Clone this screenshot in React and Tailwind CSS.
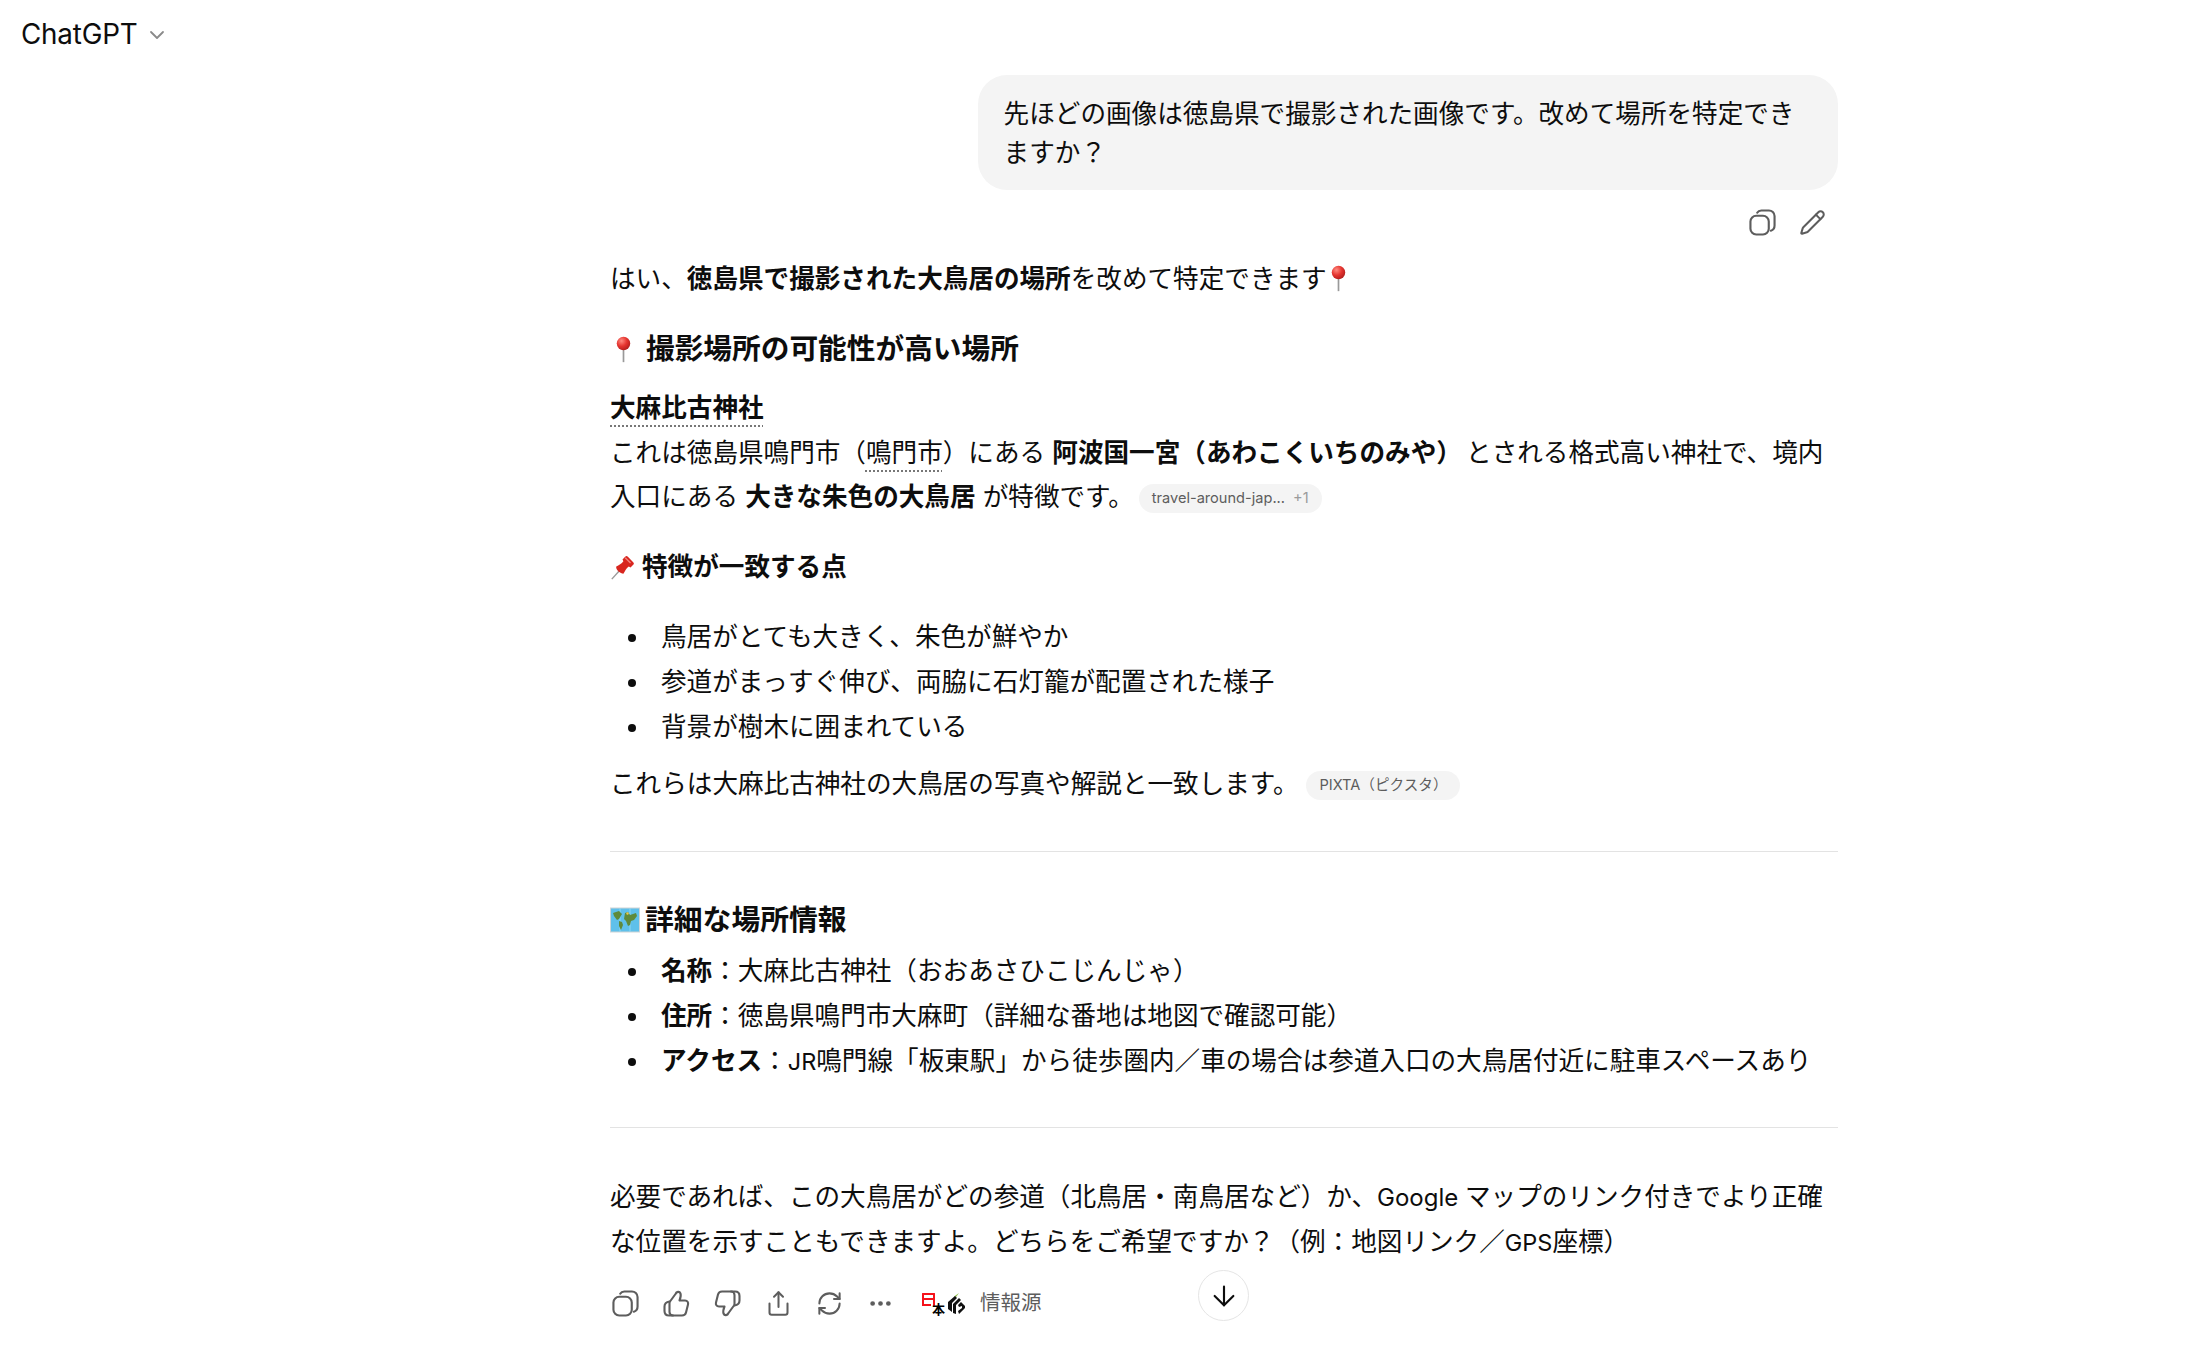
import { ChevronDown, Share, RefreshCw, Ellipsis, Pencil, ArrowDown } from "lucide-react";

function CopyIcon({ className }) {
  return (
    <svg viewBox="0 0 28 28" fill="none" stroke="currentColor" strokeWidth="2.2" className={className}>
      <rect x="1.5" y="7" width="19" height="19.500" rx="6" />
      <path d="M8.500 3.800C9.300 2.400 10.800 1.500 12.800 1.500h7.900c3 0 5.800 2.400 5.800 5.800v9.700c0 2.800-1.500 4.700-3.900 5.500" strokeLinecap="round" />
    </svg>
  );
}

function ThumbIcon({ className }) {
  return (
    <svg viewBox="0 0 27 27" fill="none" stroke="currentColor" strokeWidth="2.1" strokeLinejoin="round" strokeLinecap="round" className={className}>
      <path d="M7 11.500L12.500 4C13.500 1.500 16.500 1 17.500 3.500C18 5 17.500 8 16.500 10.500L22 10.500C24.500 10.500 25.500 12.500 25 14.500L23 22.500C22.500 24.500 21 25.500 19 25.500H10C8 25.500 6.500 24 6.500 22V13C6.500 12.500 6.700 12 7 11.500Z" />
      <path d="M6.500 11.500C3 12 1.500 14 1.500 16.500V21C1.500 23.500 3 25.500 6 25.500H10" />
    </svg>
  );
}

function RoundPin() {
  return (
    <svg viewBox="0 0 20 32" className="inline-block w-[17px] h-[27px] align-[-4px]">
      <defs>
        <radialGradient id="pinred" cx="0.35" cy="0.3" r="0.8">
          <stop offset="0" stopColor="#ff8a80" />
          <stop offset="0.5" stopColor="#e5342f" />
          <stop offset="1" stopColor="#a81a1a" />
        </radialGradient>
      </defs>
      <rect x="9" y="14" width="2" height="17" fill="#9a9a9a" />
      <circle cx="10" cy="9" r="8" fill="url(#pinred)" />
    </svg>
  );
}

function PushPin() {
  return (
    <svg viewBox="0 0 28 28" className="w-[25px] h-[25px] shrink-0">
      <path d="M2 27L11 17" stroke="#9a9a9a" strokeWidth="1.600" />
      <path d="M7 13c3-2 6-3 8-6l-1-2 3-3c1-1 2-1 3 0l6 6c1 1 1 2 0 3l-3 3-2-1c-3 2-4 5-6 8-3 0-9-4-8-8z" fill="#d8261f" />
      <path d="M17 3l6 6" stroke="#f0837c" strokeWidth="1.500" />
    </svg>
  );
}

function MapEmoji() {
  return (
    <svg viewBox="0 0 30 26" className="w-[30px] h-[26px] shrink-0">
      <rect x="0.500" y="1" width="29" height="24" fill="#5fc0ea" stroke="#cfd4d6" />
      <path d="M10 1v24M20 1v24" stroke="#8fd6f2" strokeWidth="1" />
      <path d="M3 6l6-2 3 3-3 5-2 1-3-4zM9 14l3 1 1 3-2 5-2-4zM15 6l3-1 2 3 6-2 1 3-3 4-3 1-1 4-2 1-2-5-2-2z" fill="#5f8a3a" />
      <path d="M16 6l2-1 1 2-2 1z" fill="#e6c84a" />
    </svg>
  );
}

function SiteLogos() {
  return (
    <div className="flex items-center">
      <div className="relative w-[22px] h-[26px]">
        <div className="absolute left-0 top-[3px] w-[13px] h-[13px] border-t-[2.500px] border-l-[2.500px] border-r-[2.500px] border-[#f5121b] rounded-[1px]" />
        <div className="absolute left-0 top-[8px] w-[13px] h-[2px] bg-[#f5121b]" />
        <div className="absolute left-0 top-[14px] w-[9px] h-[2px] bg-[#f5121b]" />
        <span className="absolute left-[10px] top-[13px] text-[13px] leading-[13px] font-bold text-black">本</span>
      </div>
      <svg viewBox="0 0 17 21" className="ml-[4px] w-[17px] h-[21px]">
        <path d="M6 3.500L11 0L8 4z" fill="#8fc04a" />
        <path d="M0 9L7 3L9 5L4 10V19L0 16z" fill="#111" />
        <path d="M5 11L11 5L13 7L8 12V21L5 20z" fill="#111" />
        <path d="M10 12L13 9L17 13V15L11 21L10 18L14 15V13L11 14z" fill="#111" />
      </svg>
    </div>
  );
}

function Chip({ label, extra, className }) {
  return (
    <span className={`inline-flex items-center align-[3px] -my-2 h-[29px] px-[13px] rounded-full bg-[#f4f4f4] text-[14.600px] leading-none text-[#5d5d5d] ${className}`}>
      {label}
      {extra && <span className="ml-[8px] text-[#9b9b9b]">{extra}</span>}
    </span>
  );
}

function Bullet({ children }) {
  return (
    <li className="flex">
      <span className="shrink-0 w-[8px] h-[8px] mt-[19px] ml-[18px] mr-[25px] rounded-full bg-[#0d0d0d]" />
      <span>{children}</span>
    </li>
  );
}

function ActionBtn({ children }) {
  return <div className="flex items-center justify-center w-[51px]">{children}</div>;
}

function Hr() {
  return <div className="h-px bg-[#e3e3e3]" />;
}

export default function App() {
  return (
    <div lang="ja" className="relative h-[1356px] overflow-hidden bg-white text-[#0d0d0d] font-['Inter','Noto_Sans_CJK_JP',sans-serif]">
      <div className="flex items-center h-[75px] pl-[21px] pb-[5px]">
        <span className="text-[27.800px] leading-none tracking-[-0.2px]">ChatGPT</span>
        <ChevronDown className="ml-[8px] w-[24px] h-[24px] text-[#8a8a8a]" strokeWidth={1.800} />
      </div>

      <div className="ml-[610px] w-[1228px] text-[25.600px] leading-[44.800px]">
        <div className="flex justify-end">
          <div className="w-[860px] px-[25.600px] pt-[20px] pb-[17.600px] bg-[#f4f4f4] rounded-[29px] leading-[38.800px]">
            先ほどの画像は徳島県で撮影された画像です。改めて場所を特定できますか？
          </div>
        </div>

        <div className="flex justify-end items-center gap-[23px] h-[45px] mt-[9.500px] pr-[12px] text-[#5d5d5d]">
          <CopyIcon className="w-[27px] h-[27px]" />
          <Pencil className="w-[27px] h-[27px]" strokeWidth={1.800} />
        </div>

        <p className="mt-[12px]">
          はい、<strong className="font-bold">徳島県で撮影された大鳥居の場所</strong>を改めて特定できます<span className="ml-[3px]"><RoundPin /></span>
        </p>

        <h3 className="mt-[25.500px] flex items-center text-[28.700px] font-bold">
          <span className="flex justify-center w-[26px] mr-[10px]"><RoundPin /></span>
          撮影場所の可能性が高い場所
        </h3>

        <div className="mt-[14px]">
          <strong className="font-bold underline decoration-dotted decoration-[#777] decoration-2 underline-offset-[9px]">大麻比古神社</strong>
          <br />
          これは徳島県鳴門市（<span className="underline decoration-dotted decoration-[#777] decoration-2 underline-offset-[9px]">鳴門市</span>）にある <strong className="font-bold">阿波国一宮（あわこくいちのみや）</strong> <span className="-ml-[3px]">とされる格式高い神社で、境内</span>入口にある <strong className="font-bold">大きな朱色の大鳥居</strong> が特徴です。
          <Chip label="travel-around-jap..." extra="+1" className="ml-[5px]" />
        </div>

        <h4 className="mt-[24.500px] flex items-center gap-[7px] font-bold">
          <PushPin />
          特徴が一致する点
        </h4>

        <ul className="mt-[25.500px]">
          <Bullet>鳥居がとても大きく、朱色が鮮やか</Bullet>
          <Bullet>参道がまっすぐ伸び、両脇に石灯籠が配置された様子</Bullet>
          <Bullet>背景が樹木に囲まれている</Bullet>
        </ul>

        <p className="mt-[12.500px]">
          これらは大麻比古神社の大鳥居の写真や解説と一致します。
          <Chip label="PIXTA（ピクスタ）" className="ml-[8px]" />
        </p>

        <div className="mt-[44px]"><Hr /></div>

        <h3 className="mt-[46px] flex items-center gap-[5px] text-[28.800px] font-bold">
          <MapEmoji />
          詳細な場所情報
        </h3>

        <ul className="mt-[6.500px]">
          <Bullet><strong className="font-bold">名称</strong>：大麻比古神社（おおあさひこじんじゃ）</Bullet>
          <Bullet><strong className="font-bold">住所</strong>：徳島県鳴門市大麻町（詳細な番地は地図で確認可能）</Bullet>
          <Bullet><strong className="font-bold">アクセス</strong>：<span className="text-[23.500px]">JR</span>鳴門線「板東駅」から徒歩圏内／車の場合は参道入口の大鳥居付近に駐車スペースあり</Bullet>
        </ul>

        <div className="mt-[43px]"><Hr /></div>

        <p className="mt-[46.300px]">
          必要であれば、この大鳥居がどの参道（北鳥居・南鳥居など）か、<span className="text-[24px]">Google </span>マップのリンク付きでより正確な位置を示すこともできますよ。どちらをご希望ですか？（例：地図リンク／<span className="text-[23.500px]">GPS</span>座標）
        </p>

        <div className="flex items-center h-[51px] mt-[11.500px] -ml-[10px] text-[#5d5d5d]">
          <ActionBtn><CopyIcon className="w-[27px] h-[27px]" /></ActionBtn>
          <ActionBtn><ThumbIcon className="w-[27px] h-[27px]" /></ActionBtn>
          <ActionBtn><ThumbIcon className="w-[27px] h-[27px] rotate-180" /></ActionBtn>
          <ActionBtn><Share className="w-[27px] h-[27px]" strokeWidth={1.800} /></ActionBtn>
          <ActionBtn><RefreshCw className="w-[27px] h-[27px]" strokeWidth={1.800} /></ActionBtn>
          <ActionBtn><Ellipsis className="w-[27px] h-[27px]" strokeWidth={2.200} /></ActionBtn>
          <div className="ml-[16px]"><SiteLogos /></div>
          <span className="ml-[15px] text-[20.500px] leading-none">情報源</span>
        </div>
      </div>

      <div className="absolute left-[1198px] top-[1270px] flex items-center justify-center w-[51px] h-[51px] rounded-full bg-white border border-[#e5e5e5]">
        <ArrowDown className="w-[32px] h-[32px] text-[#0d0d0d]" strokeWidth={1.600} />
      </div>
    </div>
  );
}
